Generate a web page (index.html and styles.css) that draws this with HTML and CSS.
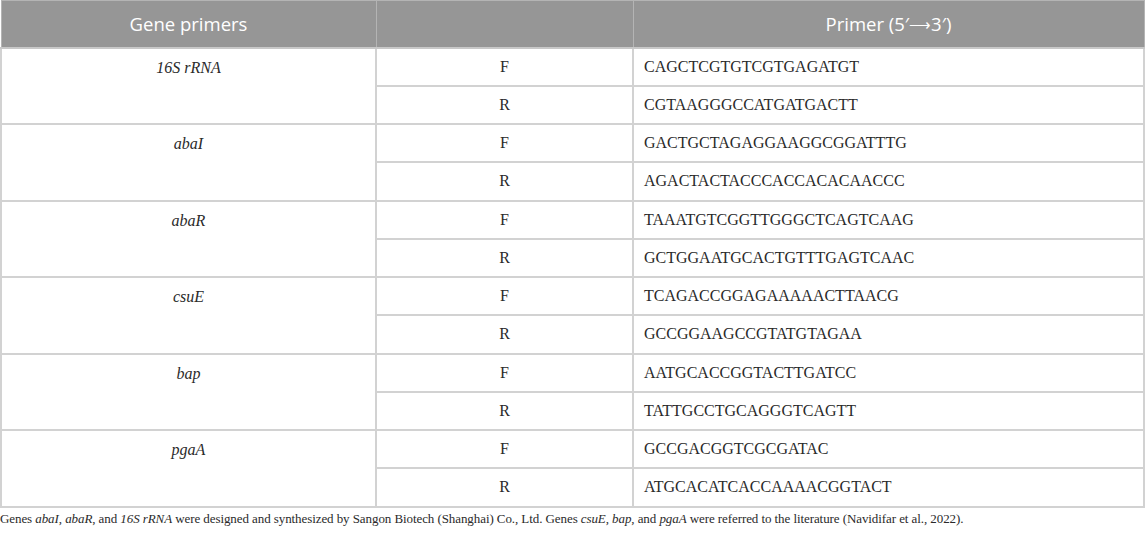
FILE: index.html
```html
<!DOCTYPE html>
<html>
<head>
<meta charset="utf-8">
<link rel="stylesheet" href="styles.css">
</head>
<body>
<table class="primers">
  <thead>
    <tr>
      <th class="c1">Gene primers</th>
      <th class="c2"></th>
      <th class="c3">Primer (5′<span class="arrow">⟶</span>3′)</th>
    </tr>
  </thead>
  <tbody>
    <tr><td class="gene" rowspan="2"><i>16S rRNA</i></td><td class="dir">F</td><td class="seq">CAGCTCGTGTCGTGAGATGT</td></tr>
    <tr><td class="dir">R</td><td class="seq">CGTAAGGGCCATGATGACTT</td></tr>
    <tr><td class="gene" rowspan="2"><i>abaI</i></td><td class="dir">F</td><td class="seq">GACTGCTAGAGGAAGGCGGATTTG</td></tr>
    <tr><td class="dir">R</td><td class="seq">AGACTACTACCCACCACACAACCC</td></tr>
    <tr><td class="gene" rowspan="2"><i>abaR</i></td><td class="dir">F</td><td class="seq">TAAATGTCGGTTGGGCTCAGTCAAG</td></tr>
    <tr><td class="dir">R</td><td class="seq">GCTGGAATGCACTGTTTGAGTCAAC</td></tr>
    <tr><td class="gene" rowspan="2"><i>csuE</i></td><td class="dir">F</td><td class="seq">TCAGACCGGAGAAAAACTTAACG</td></tr>
    <tr><td class="dir">R</td><td class="seq">GCCGGAAGCCGTATGTAGAA</td></tr>
    <tr><td class="gene" rowspan="2"><i>bap</i></td><td class="dir">F</td><td class="seq">AATGCACCGGTACTTGATCC</td></tr>
    <tr><td class="dir">R</td><td class="seq">TATTGCCTGCAGGGTCAGTT</td></tr>
    <tr><td class="gene" rowspan="2"><i>pgaA</i></td><td class="dir">F</td><td class="seq">GCCGACGGTCGCGATAC</td></tr>
    <tr><td class="dir">R</td><td class="seq">ATGCACATCACCAAAACGGTACT</td></tr>
  </tbody>
</table>
<p class="note">Genes <i>abaI</i>, <i>abaR</i>, and <i>16S rRNA</i> were designed and synthesized by Sangon Biotech (Shanghai) Co., Ltd. Genes <i>csuE</i>, <i>bap</i>, and <i>pgaA</i> were referred to the literature (Navidifar et al., 2022).</p>
</body>
</html>
```

FILE: styles.css
```css
html, body {
  margin: 0;
  padding: 0;
  background: #ffffff;
}

.primers {
  width: 1145px;
  border-collapse: collapse;
  table-layout: fixed;
  font-family: "Liberation Serif", "Times New Roman", serif;
  font-size: 16px;
  color: #2a2a2a;
}

.primers th {
  background: #969696;
  color: #ffffff;
  font-family: "Open Sans", "Noto Sans", sans-serif;
  font-weight: normal;
  font-size: 18.5px;
  height: 47px;
  padding: 0;
  text-align: center;
  border: 1px solid #b4b4b4;
  border-bottom: 2px solid #c8c8c8;
  box-sizing: border-box;
}

.primers th .arrow {
  font-family: "DejaVu Sans", sans-serif;
  font-size: 15px;
  font-weight: 200;
  position: relative;
  top: -1px;
}

.primers th.c1 { width: 375px; }
.primers th.c2 { width: 257px; }
.primers th.c3 { width: auto; }

.primers td {
  border: 2px solid #d2d2d2;
  height: 38.25px;
  padding: 0 10px;
  box-sizing: border-box;
}

.primers td.gene {
  text-align: center;
  vertical-align: top;
  padding-top: 10px;
}

.primers td.dir {
  text-align: center;
}

.primers td.seq {
  text-align: left;
}

.note {
  margin: 3px 0 0 0;
  font-family: "Liberation Serif", "Times New Roman", serif;
  font-size: 13px;
  letter-spacing: -0.08px;
  color: #2a2a2a;
  white-space: nowrap;
}
```
